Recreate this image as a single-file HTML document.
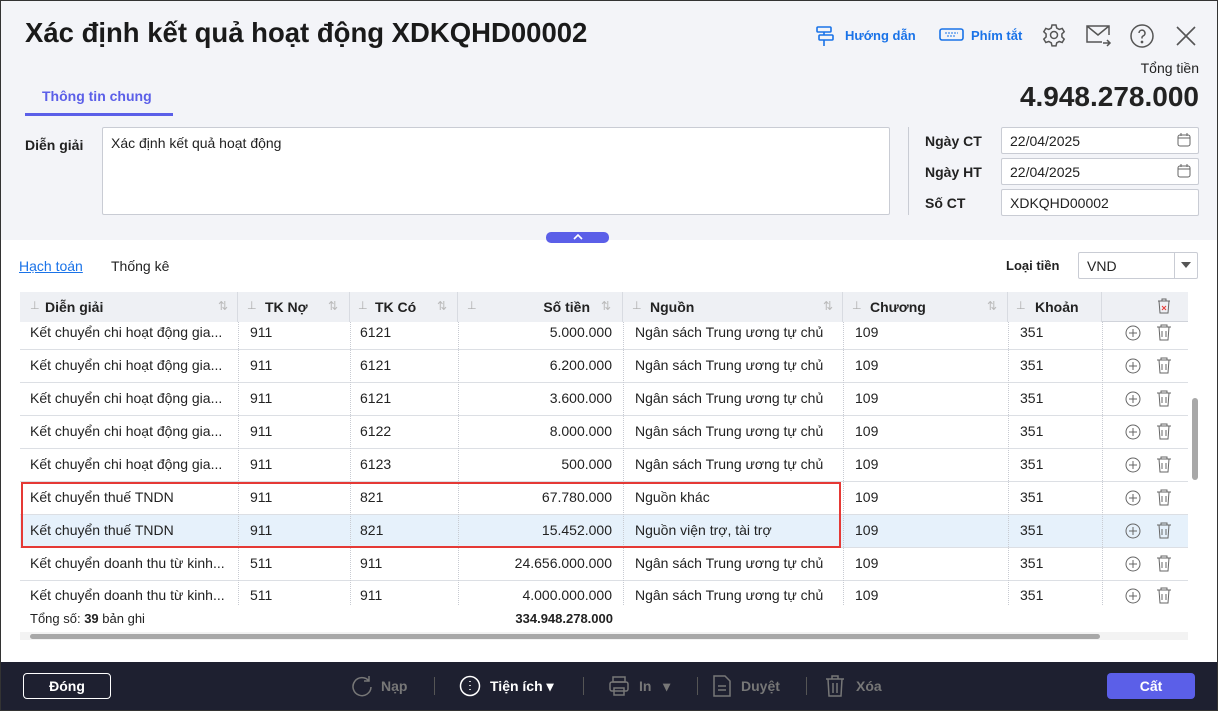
<!DOCTYPE html><html><head><meta charset="utf-8"><style>
*{box-sizing:border-box;margin:0;padding:0}
body{width:1218px;height:711px;overflow:hidden;font-family:"Liberation Sans",sans-serif;color:#222;background:#fff;position:relative;font-size:14px}
.a{position:absolute;white-space:nowrap}
.top{position:absolute;left:0;top:0;width:1218px;height:240px;background:#f3f4f8}
.inp{position:absolute;background:#fff;border:1px solid #c9ccd4;border-radius:2px;font-size:14px;padding:0 8px;display:flex;align-items:center}
.hd{position:absolute;top:292px;height:30px;background:#eef0f4;font-weight:bold;font-size:14px;display:flex;align-items:center;border-right:1px solid #d8dbe1}
.vl{position:absolute;top:322px;height:283px;border-left:1px dotted #c8cbd2}
.hl{position:absolute;left:20px;width:1168px;border-top:1px solid #dcdfe4}
</style></head><body>
<div class="top"></div>
<div class="a" style="left:25px;top:17px;font-size:27.5px;font-weight:bold;color:#1a1a1a">Xác định kết quả hoạt động XDKQHD00002</div>
<svg class="a" style="left:815px;top:25px" width="20" height="22" viewBox="0 0 20 22" fill="none" stroke="#1a73e8" stroke-width="1.6"><rect x="2" y="2" width="14" height="5" rx="1"/><rect x="4" y="10" width="14" height="5" rx="1"/><path d="M9 15v6M9 7v3"/></svg>
<div class="a" style="left:845px;top:28px;color:#1a73e8;font-size:13px;font-weight:bold">Hướng dẫn</div>
<svg class="a" style="left:939px;top:28px" width="25" height="14"><rect x="1" y="1" width="23" height="11" rx="2" fill="none" stroke="#1a73e8" stroke-width="1.6"/><path d="M6 5h13M8 8h9" stroke="#1a73e8" stroke-dasharray="2 1"/></svg>
<div class="a" style="left:971px;top:28px;color:#1a73e8;font-size:13px;font-weight:bold">Phím tắt</div>
<svg class="a" style="left:1042px;top:23px" width="24" height="24" viewBox="0 0 24 24" fill="none" stroke="#555" stroke-width="1.5"><circle cx="12" cy="12" r="3.5"/><path d="M10 2h4l.7 3 2.5 1.4 3-1 2 3.4-2.3 2.2v2.9l2.3 2.2-2 3.4-3-1-2.5 1.4-.7 3h-4l-.7-3-2.5-1.4-3 1-2-3.4 2.3-2.2v-2.9L1.8 8.8l2-3.4 3 1L9.3 5z"/></svg>
<svg class="a" style="left:1086px;top:25px" width="26" height="22" fill="none" stroke="#555" stroke-width="1.5"><path d="M16 17H1V1h22v9M1 1l11 9 11-9M17 18h7M21 15l3 3-3 3"/></svg>
<svg class="a" style="left:1130px;top:24px" width="24" height="24" fill="none" stroke="#555" stroke-width="1.5"><circle cx="12" cy="12" r="11"/><path d="M9 9a3 3 0 1 1 4 3c-1 .5-1 1-1 2.5"/><circle cx="12" cy="18" r=".6" fill="#555"/></svg>
<svg class="a" style="left:1176px;top:26px" width="20" height="20" stroke="#555" stroke-width="1.6"><path d="M1 1l18 18M19 1L1 19"/></svg>
<div class="a" style="right:19px;top:60px;font-size:14px">Tổng tiền</div>
<div class="a" style="right:19px;top:81px;font-size:28px;font-weight:bold">4.948.278.000</div>
<div class="a" style="left:42px;top:88px;color:#5b5fe8;font-weight:bold;font-size:14px">Thông tin chung</div>
<div class="a" style="left:25px;top:113px;width:148px;height:3px;background:#5b5fe8"></div>
<div class="a" style="left:25px;top:137px;font-weight:bold;font-size:14px">Diễn giải</div>
<div class="inp" style="left:102px;top:127px;width:788px;height:88px;align-items:flex-start;padding-top:7px">Xác định kết quả hoạt động</div>
<div class="a" style="left:908px;top:127px;height:88px;border-left:1px solid #c9ccd4"></div>
<div class="a" style="left:925px;top:133px;font-weight:bold">Ngày CT</div>
<div class="a" style="left:925px;top:164px;font-weight:bold">Ngày HT</div>
<div class="a" style="left:925px;top:195px;font-weight:bold">Số CT</div>
<div class="inp" style="left:1001px;top:127px;width:198px;height:27px">22/04/2025</div>
<div class="inp" style="left:1001px;top:158px;width:198px;height:27px">22/04/2025</div>
<div class="inp" style="left:1001px;top:189px;width:198px;height:27px">XDKQHD00002</div>
<svg class="a" style="left:1177px;top:133px" width="14" height="14" fill="none" stroke="#666"><rect x="1" y="2" width="12" height="11" rx="2"/><path d="M1 5h12M4 0v3M10 0v3"/></svg>
<svg class="a" style="left:1177px;top:164px" width="14" height="14" fill="none" stroke="#666"><rect x="1" y="2" width="12" height="11" rx="2"/><path d="M1 5h12M4 0v3M10 0v3"/></svg>
<div class="a" style="left:546px;top:232px;width:63px;height:11px;background:#5b5fe8;border-radius:5px"></div>
<svg class="a" style="left:572px;top:233px" width="12" height="8"><path d="M2 6l4-4 4 4" stroke="#fff" stroke-width="1.6" fill="none"/></svg>
<div class="a" style="left:19px;top:258px;color:#1a73e8;text-decoration:underline;font-size:14px">Hạch toán</div>
<div class="a" style="left:111px;top:258px;font-size:14px">Thống kê</div>
<div class="a" style="left:1006px;top:258px;font-weight:bold;font-size:13px">Loại tiền</div>
<div class="inp" style="left:1078px;top:252px;width:120px;height:27px">VND</div>
<div class="a" style="left:1174px;top:253px;height:25px;border-left:1px solid #c9ccd4"></div>
<svg class="a" style="left:1181px;top:262px" width="10" height="6"><path d="M0 0h10L5 6z" fill="#555"/></svg>
<div class="a" style="left:20px;top:292px;width:1168px;height:30px;background:#eef0f4;border-bottom:1px solid #d0d3da"></div>
<div class="hd" style="left:20px;width:218px;padding-left:25px">Diễn giải</div>
<div class="hd" style="left:238px;width:112px;padding-left:27px">TK Nợ</div>
<div class="hd" style="left:350px;width:108px;padding-left:25px">TK Có</div>
<div class="hd" style="left:458px;width:165px;justify-content:flex-end;padding-right:32px">Số tiền</div>
<div class="hd" style="left:623px;width:220px;padding-left:27px">Nguồn</div>
<div class="hd" style="left:843px;width:165px;padding-left:27px">Chương</div>
<div class="hd" style="left:1008px;width:94px;padding-left:27px">Khoản</div>
<div class="a" style="color:#aaa;font-size:11px;left:30px;top:299px">⊥</div>
<div class="a" style="color:#aaa;font-size:11px;left:247px;top:299px">⊥</div><div class="a" style="color:#aaa;font-size:11px;left:358px;top:299px">⊥</div><div class="a" style="color:#aaa;font-size:11px;left:467px;top:299px">⊥</div><div class="a" style="color:#aaa;font-size:11px;left:632px;top:299px">⊥</div><div class="a" style="color:#aaa;font-size:11px;left:852px;top:299px">⊥</div><div class="a" style="color:#aaa;font-size:11px;left:1016px;top:299px">⊥</div>
<div class="a" style="color:#bbb;font-size:12px;left:218px;top:299px">⇅</div><div class="a" style="color:#bbb;font-size:12px;left:328px;top:299px">⇅</div><div class="a" style="color:#bbb;font-size:12px;left:437px;top:299px">⇅</div><div class="a" style="color:#bbb;font-size:12px;left:601px;top:299px">⇅</div><div class="a" style="color:#bbb;font-size:12px;left:823px;top:299px">⇅</div><div class="a" style="color:#bbb;font-size:12px;left:987px;top:299px">⇅</div>
<svg class="a" style="left:1157px;top:298px" width="14" height="16" fill="none" stroke="#666"><path d="M1 3h12M5 3V1h4v2M2 3l1 12h8l1-12"/><path d="M5 8l4 4M9 8l-4 4" stroke="#e53935"/></svg>
<div class="a" style="left:20px;top:514px;width:1168px;height:33px;background:#e6f1fb"></div>
<div id="rows"></div>
<div class="vl" style="left:238px"></div><div class="vl" style="left:350px"></div><div class="vl" style="left:458px"></div><div class="vl" style="left:623px"></div><div class="vl" style="left:843px"></div><div class="vl" style="left:1008px"></div><div class="vl" style="left:1102px"></div>
<div class="a" style="left:21px;top:482px;width:820px;height:66px;border:2px solid #e53935"></div>
<div class="a" style="left:1192px;top:398px;width:6px;height:82px;background:#a8a8a8;border-radius:3px"></div>
<div class="a" style="left:30px;top:611px;font-size:13px">Tổng số: <b>39</b> bản ghi</div>
<div class="a" style="left:458px;top:611px;width:155px;text-align:right;font-weight:bold;font-size:13px">334.948.278.000</div>
<div class="a" style="left:20px;top:632px;width:1168px;height:8px;background:#f3f3f3"></div>
<div class="a" style="left:30px;top:634px;width:1070px;height:5px;background:#a8a8a8;border-radius:3px"></div>
<div class="a" style="left:0;top:662px;width:1218px;height:49px;background:#1e2030"></div>
<div class="a" style="left:23px;top:673px;width:88px;height:26px;border:1px solid #fff;border-radius:4px;color:#fff;font-weight:bold;text-align:center;line-height:24px">Đóng</div>
<svg class="a" style="left:351px;top:675px" width="22" height="22" fill="none" stroke="#777" stroke-width="1.5"><path d="M18 6A9 9 0 1 0 20 12M18 1v5h-5"/></svg>
<div class="a" style="left:381px;top:678px;font-weight:bold;color:#777">Nạp</div>
<div class="a" style="left:434px;top:677px;height:18px;border-left:1px solid #555"></div>
<svg class="a" style="left:459px;top:675px" width="22" height="22" fill="none" stroke="#fff" stroke-width="1.5"><circle cx="11" cy="11" r="9.5"/><path d="M11 6v1M11 10v1M11 14v1"/></svg>
<div class="a" style="left:490px;top:678px;color:#fff;font-weight:bold">Tiện ích ▾</div>
<div class="a" style="left:583px;top:677px;height:18px;border-left:1px solid #555"></div>
<svg class="a" style="left:608px;top:675px" width="22" height="22" fill="none" stroke="#777" stroke-width="1.5"><rect x="5" y="2" width="12" height="5"/><rect x="2" y="7" width="18" height="9" rx="2"/><rect x="6" y="13" width="10" height="7"/></svg>
<div class="a" style="left:639px;top:678px;color:#777;font-weight:bold">In &nbsp;&nbsp;▾</div>
<div class="a" style="left:697px;top:677px;height:18px;border-left:1px solid #555"></div>
<svg class="a" style="left:713px;top:675px" width="18" height="22" fill="none" stroke="#777" stroke-width="1.5"><path d="M1 1h11l5 5v15H1zM5 11h8M5 15h8"/></svg>
<div class="a" style="left:741px;top:678px;color:#777;font-weight:bold">Duyệt</div>
<div class="a" style="left:806px;top:677px;height:18px;border-left:1px solid #555"></div>
<svg class="a" style="left:825px;top:675px" width="20" height="22" fill="none" stroke="#777" stroke-width="1.5"><path d="M1 4h18M7 4V1h6v3M3 4l1 17h12l1-17M8 8v10M12 8v10"/></svg>
<div class="a" style="left:856px;top:678px;color:#777;font-weight:bold">Xóa</div>
<div class="a" style="left:1107px;top:673px;width:88px;height:26px;background:#5b5fe8;border-radius:4px;color:#fff;font-weight:bold;text-align:center;line-height:26px">Cất</div>
<div class="a" style="left:0;top:0;width:1218px;height:711px;border:1px solid #333;pointer-events:none"></div>
<script>
var d=[["Kết chuyển chi hoạt động gia...","911","6121","5.000.000","Ngân sách Trung ương tự chủ"],["Kết chuyển chi hoạt động gia...","911","6121","6.200.000","Ngân sách Trung ương tự chủ"],["Kết chuyển chi hoạt động gia...","911","6121","3.600.000","Ngân sách Trung ương tự chủ"],["Kết chuyển chi hoạt động gia...","911","6122","8.000.000","Ngân sách Trung ương tự chủ"],["Kết chuyển chi hoạt động gia...","911","6123","500.000","Ngân sách Trung ương tự chủ"],["Kết chuyển thuế TNDN","911","821","67.780.000","Nguồn khác"],["Kết chuyển thuế TNDN","911","821","15.452.000","Nguồn viện trợ, tài trợ"],["Kết chuyển doanh thu từ kinh...","511","911","24.656.000.000","Ngân sách Trung ương tự chủ"],["Kết chuyển doanh thu từ kinh...","511","911","4.000.000.000","Ngân sách Trung ương tự chủ"]];
var h="";d.forEach(function(r,i){var y=324+33*i;if(i==8)y=323+33*i;
h+='<div class="a" style="left:30px;top:'+y+'px">'+r[0]+'</div><div class="a" style="left:250px;top:'+y+'px">'+r[1]+'</div><div class="a" style="left:360px;top:'+y+'px">'+r[2]+'</div><div class="a" style="left:458px;width:154px;text-align:right;top:'+y+'px">'+r[3]+'</div><div class="a" style="left:635px;top:'+y+'px">'+r[4]+'</div><div class="a" style="left:855px;top:'+y+'px">109</div><div class="a" style="left:1020px;top:'+y+'px">351</div>';
h+='<svg class="a" style="left:1125px;top:'+(y+1)+'px" width="16" height="16" fill="none" stroke="#666"><circle cx="8" cy="8" r="7"/><path d="M8 4v8M4 8h8"/></svg><svg class="a" style="left:1156px;top:'+(y)+'px" width="16" height="18" fill="none" stroke="#666"><path d="M1 3h14M5 3V1h6v2M3 3l1 13h8l1-13M6 7v6M10 7v6"/></svg>';
if(i<8)h+='<div class="hl" style="top:'+(y+25)+'px"></div>';});
document.getElementById("rows").innerHTML=h;
</script>
</body></html>
